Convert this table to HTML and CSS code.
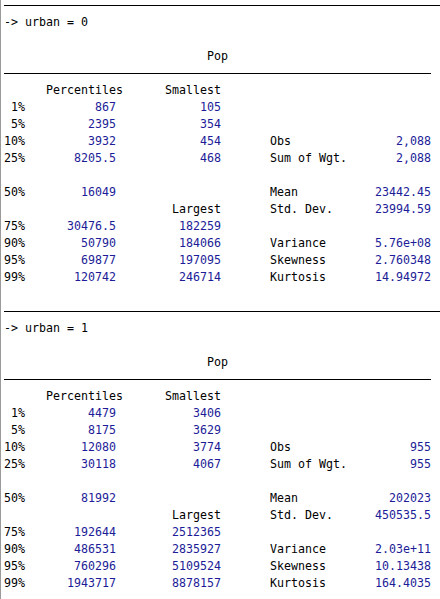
FILE: index.html
```html
<!DOCTYPE html>
<html>
<head>
  <title>Results</title>
  <link rel="stylesheet" href="styles.css">
</head>
<body>
  <div class="results">
    <div class="rule rule-full first"></div>
    <div class="line">-&gt; urban = 0</div>
    <div class="line"></div>
    <div class="line">                             Pop</div>
    <div class="rule rule-table"></div>
    <div class="line">      Percentiles      Smallest</div>
    <div class="line"> 1%          <span class="num">867</span>            <span class="num">105</span></div>
    <div class="line"> 5%         <span class="num">2395</span>            <span class="num">354</span></div>
    <div class="line">10%         <span class="num">3932</span>            <span class="num">454</span>       Obs               <span class="num">2,088</span></div>
    <div class="line">25%       <span class="num">8205.5</span>            <span class="num">468</span>       Sum of Wgt.       <span class="num">2,088</span></div>
    <div class="line"></div>
    <div class="line">50%        <span class="num">16049</span>                      Mean           <span class="num">23442.45</span></div>
    <div class="line">                        Largest       Std. Dev.      <span class="num">23994.59</span></div>
    <div class="line">75%      <span class="num">30476.5</span>         <span class="num">182259</span></div>
    <div class="line">90%        <span class="num">50790</span>         <span class="num">184066</span>       Variance       <span class="num">5.76e+08</span></div>
    <div class="line">95%        <span class="num">69877</span>         <span class="num">197095</span>       Skewness       <span class="num">2.760348</span></div>
    <div class="line">99%       <span class="num">120742</span>         <span class="num">246714</span>       Kurtosis       <span class="num">14.94972</span></div>
    <div class="line"></div>

    <div class="rule rule-full"></div>
    <div class="line">-&gt; urban = 1</div>
    <div class="line"></div>
    <div class="line">                             Pop</div>
    <div class="rule rule-table"></div>
    <div class="line">      Percentiles      Smallest</div>
    <div class="line"> 1%         <span class="num">4479</span>           <span class="num">3406</span></div>
    <div class="line"> 5%         <span class="num">8175</span>           <span class="num">3629</span></div>
    <div class="line">10%        <span class="num">12080</span>           <span class="num">3774</span>       Obs                 <span class="num">955</span></div>
    <div class="line">25%        <span class="num">30118</span>           <span class="num">4067</span>       Sum of Wgt.         <span class="num">955</span></div>
    <div class="line"></div>
    <div class="line">50%        <span class="num">81992</span>                      Mean             <span class="num">202023</span></div>
    <div class="line">                        Largest       Std. Dev.      <span class="num">450535.5</span></div>
    <div class="line">75%       <span class="num">192644</span>        <span class="num">2512365</span></div>
    <div class="line">90%       <span class="num">486531</span>        <span class="num">2835927</span>       Variance       <span class="num">2.03e+11</span></div>
    <div class="line">95%       <span class="num">760296</span>        <span class="num">5109524</span>       Skewness       <span class="num">10.13438</span></div>
    <div class="line">99%      <span class="num">1943717</span>        <span class="num">8878157</span>       Kurtosis       <span class="num">164.4035</span></div>
  </div>
</body>
</html>
```

FILE: styles.css
```css
/* Stata results window */
html, body {
  height: 100%;
}

body {
  margin: 0;
  background: #fff;
  border-left: 1px solid #9a9a9a;
  overflow: hidden;
}

.results {
  padding-left: 3px;
  font-family: "DejaVu Sans Mono", "Liberation Mono", monospace;
  font-size: 11.63px;
  color: #000;
}

.line {
  height: 17px;
  line-height: 17px;
  white-space: pre;
}

.num {
  color: #1c1c98;
}

.rule {
  height: 17px;
  padding-top: 8px;
  box-sizing: border-box;
}

.rule::after {
  content: "";
  display: block;
  border-top: 1px solid #000;
}

.rule.first {
  height: 14px;
  padding-top: 5px;
}

.rule-table::after {
  width: 427px;
}
```
